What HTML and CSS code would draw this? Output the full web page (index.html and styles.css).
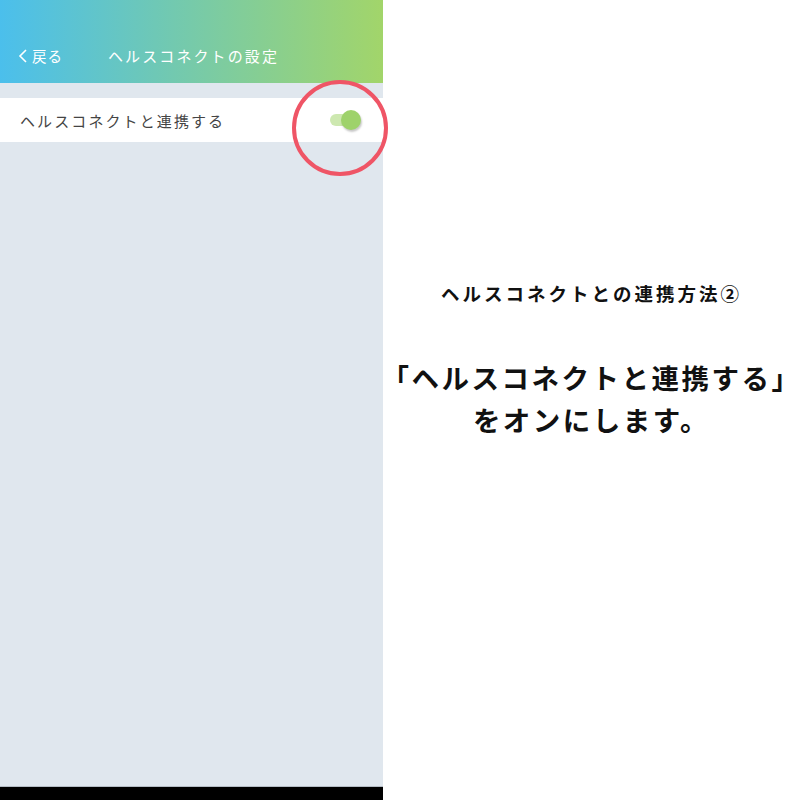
FILE: index.html
```html
<!DOCTYPE html>
<html lang="ja">
<head>
<meta charset="utf-8">
<link rel="stylesheet" href="styles.css">
</head>
<body>
<div class="page">
  <div class="phone">
    <div class="screen">
      <header class="header">
        <div class="back"><span class="chev"><svg width="12" height="16" viewBox="0 0 12 16"><path d="M9 2 L3 8 L9 14" fill="none" stroke="#fff" stroke-width="1.6"/></svg></span>戻る</div>
        <div class="title">ヘルスコネクトの設定</div>
      </header>
      <div class="row">
        <span class="label">ヘルスコネクトと連携する</span>
        <span class="toggle"><span class="track"></span><span class="knob"></span></span>
        <span class="ring"></span>
      </div>
    </div>
    <div class="navbar"></div>
  </div>
  <div class="caption">
    <div class="subtitle">ヘルスコネクトとの連携方法②</div>
    <div class="main">「ヘルスコネクトと連携する」<br>をオンにします。</div>
  </div>
</div>
</body>
</html>
```
FILE: styles.css
```css
html, body {
  margin: 0;
  padding: 0;
  background: #fff;
}
body {
  font-family: "Noto Sans CJK JP", "Noto Sans", sans-serif;
}
.page {
  display: flex;
  width: 800px;
  height: 800px;
}
.phone {
  width: 383px;
  flex-shrink: 0;
  display: flex;
  flex-direction: column;
  position: relative;
  z-index: 1;
}
.screen {
  flex: 1;
  background: #e0e7ee;
  border-bottom: 1px solid #b4bcc4;
}
.navbar {
  height: 13px;
  background: #000;
}
.header {
  height: 83px;
  background: linear-gradient(90deg, #4bbfec 0%, #72c9b0 45%, #a2d56a 100%);
  display: flex;
  align-items: flex-end;
  padding-bottom: 16px;
  box-sizing: border-box;
  color: #fff;
  font-size: 14.5px;
  letter-spacing: 1px;
}
.back {
  display: flex;
  align-items: center;
  margin-left: 17px;
  width: 91px;
  line-height: 22px;
}
.chev {
  display: flex;
  margin-right: 3px;
}
.title {
  font-size: 15px;
  letter-spacing: 2.1px;
  line-height: 22px;
}
.row {
  margin-top: 15px;
  height: 44px;
  background: #fff;
  display: flex;
  align-items: center;
  padding-left: 20px;
  position: relative;
}
.label {
  font-size: 15px;
  color: #444;
  letter-spacing: 2.1px;
}
.toggle {
  position: absolute;
  left: 330px;
  top: 12px;
  width: 32px;
  height: 20px;
}
.track {
  position: absolute;
  left: 0;
  top: 4px;
  width: 26px;
  height: 12px;
  border-radius: 6px;
  background: #cde8b0;
}
.knob {
  position: absolute;
  left: 11px;
  top: 0;
  width: 20px;
  height: 20px;
  border-radius: 50%;
  background: #9ed26b;
  box-shadow: 1px 2px 2px rgba(0,0,0,0.22);
}
.ring {
  position: absolute;
  left: 292px;
  top: -18px;
  width: 88px;
  height: 88px;
  border: 4px solid #ef5566;
  border-radius: 50%;
}
.caption {
  flex: 1;
  min-width: 0;
  display: flex;
  flex-direction: column;
  align-items: center;
  color: #111;
  font-weight: bold;
  padding-top: 279px;
}
.subtitle {
  font-size: 18.5px;
  letter-spacing: 3px;
  line-height: 28px;
  white-space: nowrap;
}
.main {
  margin-top: 49px;
  font-size: 27.5px;
  letter-spacing: 2.5px;
  line-height: 42px;
  text-align: center;
  white-space: nowrap;
}
```
